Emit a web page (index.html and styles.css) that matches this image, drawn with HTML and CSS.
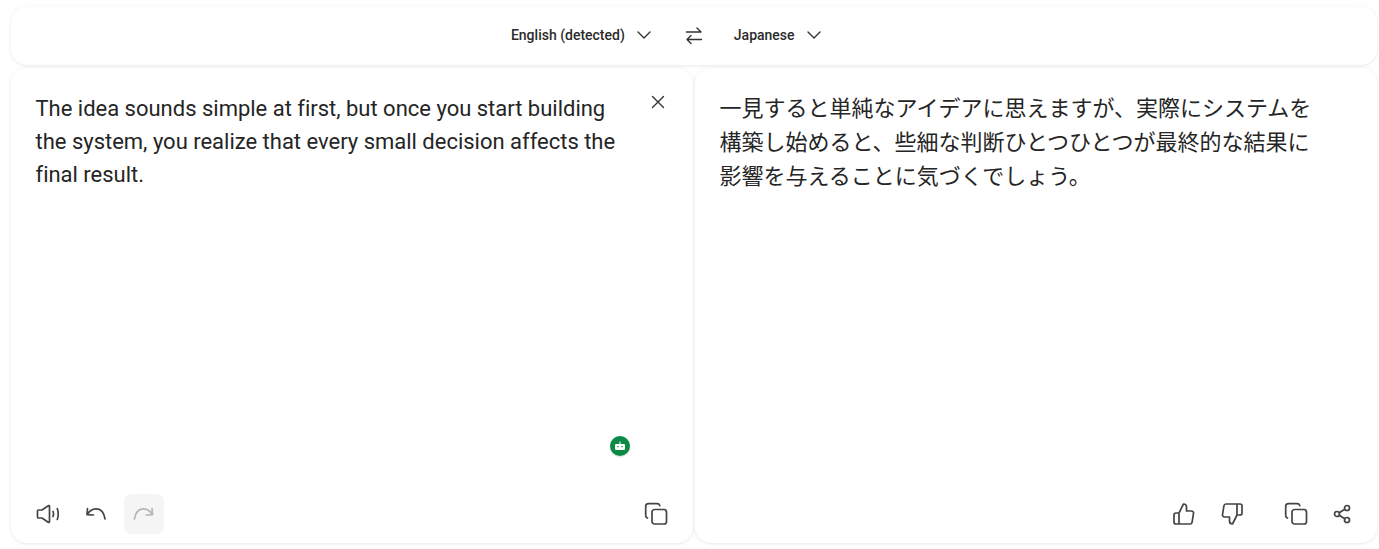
FILE: index.html
```html
<!DOCTYPE html>
<html lang="en">
<head>
<meta charset="utf-8">
<title>Translate</title>
<link rel="stylesheet" href="styles.css">
</head>
<body>
<main class="app">
  <header class="card langbar">
    <button class="lang lang-src"><span>English (detected)</span>
      <svg class="chev" viewBox="0 0 14 14"><path d="M1 4 7 10l6-6"/></svg></button>
    <button class="swap"><svg viewBox="0 0 20 20"><path d="M2.500 6h14.500M13 2l4 4M17.500 13.500H3M7 9.500l-4 4 4 4"/></svg></button>
    <button class="lang lang-dst"><span>Japanese</span>
      <svg class="chev" viewBox="0 0 14 14"><path d="M1 4 7 10l6-6"/></svg></button>
  </header>
  <section class="panels">
    <article class="card panel panel-src">
      <div class="body">
        <p class="text">The idea sounds simple at first, but once you start building the system, you realize that every small decision affects the final result.</p>
        <button class="clear"><svg viewBox="0 0 14 14"><path d="M1.500 1.500l11 11M12.500 1.500l-11 11"/></svg></button>
        <span class="bot"><svg viewBox="0 0 14 14"><path class="fill" d="M3 5h8a1 1 0 0 1 1 1v4a1 1 0 0 1-1 1H3a1 1 0 0 1-1-1V6a1 1 0 0 1 1-1zM6.500 2.500h1V5h-1z"/><path class="hole" d="M4.300 7h1.300v1.300H4.300zM8.400 7h1.300v1.300H8.400z"/></svg></span>
      </div>
      <footer class="tools">
        <div class="group">
          <button class="tool"><svg viewBox="0 0 24 24"><path d="M6 8H2.500a1 1 0 0 0-1 1v6a1 1 0 0 0 1 1H6l6.200 4.300a.8.8 0 0 0 1.300-.7V4.400a.8.8 0 0 0-1.300-.7zM17 9.500c.7 1.600.7 3.400 0 5M21.300 6.500c1.200 3.600 1.200 7.400 0 11"/></svg></button>
          <button class="tool"><svg viewBox="0 0 24 24"><path d="M3.500 6.500l-.5 6.200 6.500.3M3 12.500C5.500 9 8.500 6.800 12 6.800c4.500 0 8 3.700 9 10"/></svg></button>
          <button class="tool tool-off"><svg viewBox="0 0 24 24"><path d="M20 6.500l.5 6.200-6.500.3M20.500 12.500C18 9 15 6.800 11.500 6.800c-4.500 0-8 3.700-9 10"/></svg></button>
        </div>
        <button class="tool"><svg viewBox="0 0 24 24"><use href="#copy"/></svg></button>
      </footer>
    </article>
    <article class="card panel panel-dst">
      <div class="body">
        <p class="text text-ja">一見すると単純なアイデアに思えますが、実際にシステムを構築し始めると、些細な判断ひとつひとつが最終的な結果に影響を与えることに気づくでしょう。</p>
      </div>
      <footer class="tools tools-end">
        <button class="tool"><svg viewBox="0 0 24 24"><use href="#thumb"/></svg></button>
        <button class="tool tool-down"><svg viewBox="0 0 24 24"><use href="#thumb"/></svg></button>
        <button class="tool tool-gap"><svg viewBox="0 0 24 24"><use href="#copy"/></svg></button>
        <button class="tool tool-share"><svg viewBox="0 0 24 24"><circle cx="17" cy="6" r="2.500"/><circle cx="7" cy="12" r="2.500"/><circle cx="17" cy="18" r="2.500"/><path d="M9.200 10.700l5.600-3.400M9.200 13.300l5.600 3.400"/></svg></button>
      </footer>
    </article>
  </section>
</main>
<svg class="defs" aria-hidden="true"><defs>
  <g id="copy"><rect x="8" y="7.500" width="14.500" height="14.500" rx="2.500"/><path d="M3.500 16c-1.200-.4-1.800-1.300-1.800-2.500V4.500c0-1.600 1.300-2.800 2.800-2.800H13c1.300 0 2.400.7 2.800 1.900"/></g>
  <g id="thumb"><path d="M7 22H4a2 2 0 0 1-2-2v-7a2 2 0 0 1 2-2h3l4.500-9c1.700 0 3 1.300 3 3v4h5c1.300 0 2.200 1.100 2 2.300l-1.400 8.800c-.2 1-1 1.900-2 1.900H7zM7 11v11"/></g>
</defs></svg>
</body>
</html>
```
FILE: styles.css
```css
* { box-sizing: border-box; }
html, body { margin: 0; height: 100%; }
body {
  background: #fff;
  font-family: Roboto, "Noto Sans CJK JP", sans-serif;
  font-variant-ligatures: none;
  color: #252525;
  overflow: hidden;
}
button {
  border: 0; background: none; padding: 0; font: inherit; color: inherit;
  display: flex; align-items: center; justify-content: center;
}
svg { fill: none; stroke: #444; stroke-width: 1.700; stroke-linecap: round; stroke-linejoin: round; display: block; }
.defs { position: absolute; width: 0; height: 0; }
.app { display: flex; flex-direction: column; gap: 3px; padding: 7px 2px 6px 11px; height: 549px; }
.card { background: #fff; box-shadow: 0 0 6px rgba(0,0,0,.035), 0 1px 3px rgba(0,0,0,.07); }
.langbar {
  height: 58px; border-radius: 16px;
  display: flex; align-items: center; justify-content: center;
  padding: 0 56.500px 2px 0;
}
.lang { gap: 12px; font-size: 14px; font-weight: 500; color: #2b2b2b; }
.chev { width: 14px; height: 14px; stroke-width: 1.400; stroke: #333; }
.swap { margin: 2px 30px 0 33px; }
.swap svg { width: 20px; height: 20px; stroke-width: 1.400; stroke: #333; }
.panels { flex: 1; display: grid; grid-template-columns: 682px 682px; gap: 2px; min-height: 0; }
.panel { display: flex; flex-direction: column; border-radius: 16px; }
.body { flex: 1; position: relative; padding: 24px 72px 0 24.500px; }
.panel-dst .body { padding-right: 60px; }
.text { margin: 0; font-size: 22px; line-height: 33px; letter-spacing: -0.01px; }
.text-ja { line-height: 34px; letter-spacing: 0; }
.clear { position: absolute; top: 27px; left: 640px; width: 14px; height: 14px; }
.clear svg { width: 14px; height: 14px; stroke-width: 1.400; stroke: #333; }
.bot {
  position: absolute; left: 599px; top: 368px; width: 20px; height: 20px;
  border-radius: 50%; background: #0b8a45; display: flex; align-items: center; justify-content: center;
  box-shadow: 0 1px 2px rgba(0,0,0,.15);
}
.bot svg { width: 14px; height: 14px; stroke: none; }
.bot .fill { fill: #fff; }
.bot .hole { fill: #0b8a45; }
.tools { height: 60px; flex: none; display: flex; align-items: flex-start; justify-content: space-between; padding: 11px 17px 0 17px; }
.tools-end { justify-content: flex-end; padding-right: 23px; }
.group { display: flex; gap: 8px; }
.tool { width: 40px; height: 40px; border-radius: 8px; flex: none; }
.tool svg { width: 24px; height: 24px; stroke-width: 1.700; }
.tool-off { background: #f5f5f5; }
.tool-off svg { stroke: #b5b5b5; }
.tools-end .tool { width: 24px; margin-left: 24px; }
.tools-end .tool-gap { margin-left: 40px; }
.tools-end .tool-share { margin-left: 22px; }
.tool-down svg { transform: rotate(180deg); }
```
